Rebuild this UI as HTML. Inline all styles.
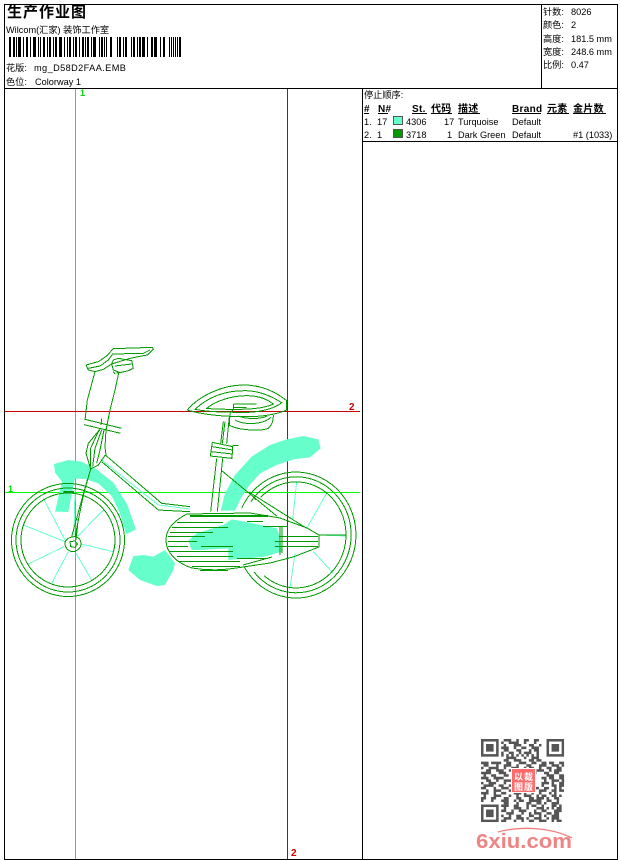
<!DOCTYPE html>
<html lang="zh"><head><meta charset="utf-8"><title>生产作业图</title>
<style>
html,body{margin:0;padding:0;background:#fff;width:620px;height:860px;overflow:hidden}
svg{display:block}
text{font-family:"Liberation Sans","WenQuanYi Zen Hei","Noto Sans CJK SC",sans-serif;font-size:9.2px;fill:#000}
.b{font-weight:bold;font-size:10px;letter-spacing:.3px}
.bl{stroke:#000;stroke-width:1;fill:none;shape-rendering:crispEdges}
.g{shape-rendering:crispEdges}
.g path,.g ellipse,.g circle{fill:none;stroke:#009900;stroke-width:1;vector-effect:non-scaling-stroke}
.t{fill:#66FFCC;stroke:none}
.s{shape-rendering:crispEdges}
.s path{fill:none;stroke:#66FFCC;stroke-width:1;vector-effect:non-scaling-stroke}
</style></head><body>
<svg width="620" height="860" viewBox="0 0 620 860" xmlns="http://www.w3.org/2000/svg">
<defs><clipPath id="qc"><rect x="0" y="0" width="33" height="33"/></clipPath></defs>
<rect width="620" height="860" fill="#fff"/>

<!-- guide lines -->
<g shape-rendering="crispEdges" stroke-width="1">
<path d="M75.5 89V859" stroke="#00FF00"/>
<path d="M287.5 89V859" stroke="#CC0000"/>
<path d="M4 411.5H360" stroke="#CC0000"/>
<path d="M4 492.5H360" stroke="#00FF00"/>
</g>
<text x="80" y="96" class="b" style="fill:#00dd00;font-size:9px">1</text>
<text x="8" y="492" class="b" style="fill:#00dd00;font-size:9px">1</text>
<text x="349" y="410" class="b" style="fill:#cc0000;font-size:10px">2</text>
<text x="291" y="856" class="b" style="fill:#cc0000;font-size:10px">2</text>

<!-- turquoise fills -->
<g transform="translate(0,340) scale(.33333)">
<path class="t" d="M162 372L205 360L245 365L290 388L340 428L380 490L408 568L378 583L360 520L335 468L295 430L255 417L225 416L222 428L205 516L165 515L186 425L165 398Z"/>
<path class="t" d="M385 690L400 648L430 645L460 650L495 630L525 670L520 690L495 735L470 738L420 720Z"/>
</g>
<g transform="translate(180,380) scale(.33333)">
<path class="t" d="M122 392L135 340L165 285L215 230L270 195L320 178L370 168L415 178L422 205L390 232L340 238L290 255L240 280L205 320L180 360L165 392Z"/>
<path class="t" d="M25 482L50 460L130 435L155 418L195 425L290 445L300 470L305 515L255 530L145 540L145 505L60 510L35 510Z"/>
</g>

<!-- spokes -->
<g class="s" transform="translate(0,340) scale(.33333)">
<path d="M195 600L130 475M195 605L70 555M192 620L85 672M205 635L155 730M228 640L275 720M243 612L340 635M232 590L310 510M222 585L225 450M305 360L475 495L570 507"/>
</g>
<g class="s" transform="translate(180,380) scale(.33333)">
<path d="M380 445L440 340M338 420L350 305M420 465L498 468M400 515L460 580M345 520L330 625"/>
</g>

<!-- wheels -->
<g class="g">
<ellipse cx="68" cy="540" rx="56.5" ry="56.5"/>
<ellipse cx="68" cy="540" rx="52" ry="52"/>
<ellipse cx="68" cy="540" rx="47" ry="47"/>
<path d="M241.6 508.4A60 63 0 1 1 244 566.5"/>
<path d="M251 501.7A55 58 0 1 1 254 572"/>
<path d="M260.6 497.5A50 53 0 1 1 264 575.6"/>
</g>

<!-- handlebar -->
<g class="g" transform="translate(70,340) scale(.33333)">
<path d="M48 75L85 65L110 48L130 26L248 22L250 28L232 45L215 48L180 55L125 72L100 88L75 95L55 90Z"/>
<path d="M55 85L90 78L115 60L128 42L220 40L240 30"/>
<path d="M125 72L130 60L145 55L185 62L190 85L175 92L150 98L130 90L125 72"/>
<path d="M135 78L185 72M130 95L135 102M145 95L140 100"/>
</g>
<!-- bike lines -->
<g class="g" transform="translate(0,340) scale(.33333)">
<path d="M285 95L262 180L255 240M357 95L345 150L330 210L318 270L315 320L318 345"/>
<path d="M255 238L365 265M252 254L362 280M305 235L303 255"/>
<path d="M300 268L265 310L258 340L272 387L295 375L316 345M305 270L285 325L278 380M298 268L272 325L272 380M312 270L300 330L290 370"/>
<path d="M272 387L250 465L225 590M262 420L245 480L215 590M235 535L228 600"/>
<path d="M195 610C195 598 210 590 225 590C238 592 243 602 243 612C243 625 228 636 215 635C203 632 195 622 195 610Z"/>
<path d="M210 605L225 603L232 612L225 622L212 620Z"/>
<path d="M316 345L485 490L570 500M305 365L475 510L570 515"/>
<path d="M190 455H222M190 457H222"/>
</g>
<g class="g" transform="translate(180,380) scale(.33333)">
<!-- saddle -->
<path d="M22 90C60 45 130 15 190 15C250 15 295 42 320 62L320 90C285 105 245 110 200 110C140 110 70 105 22 90Z"/>
<path d="M45 88C80 55 130 32 195 32C245 32 285 55 305 68C285 85 240 97 200 97C150 97 90 97 45 88Z"/>
<path d="M80 85C110 60 160 47 200 47C240 47 265 60 280 72C260 82 220 88 170 88C130 88 100 88 80 85Z"/>
<path d="M160 72H230M160 82H200M160 72V88L150 100"/>
<path d="M150 100L148 135C170 150 240 155 265 145C275 135 280 125 280 105M165 120C190 135 250 135 272 112M175 108C200 118 240 118 262 108"/>
<!-- seat post -->
<path d="M130 125L122 190M135 125L127 190M148 110L140 190"/>
<path d="M97 187L158 200L156 235L91 228ZM97 200L158 210M94 215L156 222M158 197H175"/>
<path d="M110 235L92 395M128 235L112 395"/>
<path d="M125 272L290 408M205 335L380 445M228 360L215 345"/>
</g>
<!-- chain guard and hatching -->
<g class="g">
<path d="M187 514C175 520 166 528 166 540C166 552 176 563 192 568C210 571 225 570 243 567L270 563L293 557L319 547V535L307 528L280 518L250 513L187 514"/>
<path d="M243 565L272 557M280 527V555M282 527V553M319 535H346"/>
<path d="M190 515.5H268M190 516.5H268"/>
<path d="M177 522.5H223M172 527.5H228M170 532.5H213M168 536.5H205M168 541.5H197M168 546.5H188M201 546.5H233M169 551.5H233M177 556.5H233M178 561.5H240M192 566.5H240M200 570.5H228"/>
<path d="M247 521.5H263M263 526.5H288M279 536.5H318M275 541.5H318M275 546.5H318M237 558.5H268"/>
</g>

<!-- frame borders -->
<g class="bl">
<rect x="4.5" y="4.5" width="613" height="855"/>
<path d="M4 88.5H618M541.5 4V88M362.5 88V860M362 141.5H618"/>
</g>

<!-- title -->
<text x="7" y="17" style="font-size:15px;font-weight:bold;letter-spacing:1px">生产作业图</text>
<text x="6" y="33">Wilcom(汇家) 装饰工作室</text>

<!-- barcode -->
<g fill="#000" shape-rendering="crispEdges">
<path d="M9 37h2v20h-2zM13 37h2v20h-2zM16 37h1v20h-1zM18 37h3v20h-3zM23 37h1v20h-1zM26 37h2v20h-2zM30 37h1v20h-1zM33 37h3v20h-3zM38 37h1v20h-1zM40 37h1v20h-1zM43 37h2v20h-2zM47 37h1v20h-1zM49 37h2v20h-2zM53 37h1v20h-1zM55 37h2v20h-2zM59 37h3v20h-3zM64 37h1v20h-1zM67 37h1v20h-1zM69 37h2v20h-2zM73 37h1v20h-1zM75 37h2v20h-2zM79 37h1v20h-1zM82 37h2v20h-2zM85 37h1v20h-1zM87 37h2v20h-2zM91 37h1v20h-1zM93 37h3v20h-3z"/>
<path d="M99 37h1v20h-1zM101 37h2v20h-2zM104 37h1v20h-1zM106 37h1v20h-1zM110 37h2v20h-2zM117 37h1v20h-1zM119 37h2v20h-2zM123 37h1v20h-1zM125 37h2v20h-2zM131 37h1v20h-1zM133 37h2v20h-2zM137 37h1v20h-1zM139 37h2v20h-2zM142 37h3v20h-3zM147 37h1v20h-1zM151 37h2v20h-2zM154 37h3v20h-3zM160 37h1v20h-1zM163 37h2v20h-2zM169 37h1v20h-1zM171 37h1v20h-1zM173 37h1v20h-1zM175 37h1v20h-1zM177 37h1v20h-1zM179 37h2v20h-2z"/>
</g>

<text x="6" y="71">花版:</text>
<text x="34" y="71" style="letter-spacing:.4px">mg_D58D2FAA.EMB</text>
<text x="6" y="85">色位:</text>
<text x="35" y="85">Colorway 1</text>

<!-- info -->
<text x="543" y="15">针数:</text><text x="571" y="15">8026</text>
<text x="543" y="28">颜色:</text><text x="571" y="28">2</text>
<text x="543" y="42">高度:</text><text x="571" y="42">181.5 mm</text>
<text x="543" y="55">宽度:</text><text x="571" y="55">248.6 mm</text>
<text x="543" y="68">比例:</text><text x="571" y="68">0.47</text>

<!-- table -->
<text x="364" y="98">停止顺序:</text>
<text x="364" y="112" class="b">#</text>
<text x="378" y="112" class="b">N#</text>
<text x="412" y="112" class="b">St.</text>
<text x="431" y="112" class="b">代码</text>
<text x="458" y="112" class="b">描述</text>
<text x="512" y="112" class="b">Brand</text>
<text x="547" y="112" class="b">元素</text>
<text x="573" y="112" class="b">金片数</text>
<path d="M364 113.5H369M378 113.5H388M412 113.5H427M431 113.5H452M458 113.5H480M512 113.5H541M547 113.5H569M573 113.5H606" stroke="#000" shape-rendering="crispEdges"/>

<text x="364" y="125">1.</text><text x="377" y="125">17</text>
<rect x="393.5" y="116.5" width="9" height="8" fill="#66FFCC" stroke="#555" shape-rendering="crispEdges"/>
<text x="406" y="125">4306</text><text x="444" y="125">17</text><text x="458" y="125">Turquoise</text><text x="512" y="125">Default</text>

<text x="364" y="138">2.</text><text x="377" y="138">1</text>
<rect x="393.5" y="129.5" width="9" height="8" fill="#009900" stroke="#555" shape-rendering="crispEdges"/>
<text x="406" y="138">3718</text><text x="447" y="138">1</text><text x="458" y="138">Dark Green</text><text x="512" y="138">Default</text><text x="573" y="138">#1 (1033)</text>

<!-- QR -->
<g transform="translate(481,739) scale(2.52)" clip-path="url(#qc)">
<g fill="none" stroke="#555" stroke-width="1">
<rect x=".5" y=".5" width="6" height="6"/><rect x="26.5" y=".5" width="6" height="6"/><rect x=".5" y="26.5" width="6" height="6"/>
<path d="M9 .5h3m2 0h1m2 0h2m2 0h2M8 1.5h1m2 0h4m2 0h1m3 0h1M9 2.5h1m3 0h3m3 0h2m2 0h1M8 3.5h3m2 0h1m2 0h2m2 0h3M9 4.5h2m3 0h2m3 0h1m1 0h2M8 5.5h1m2 0h2m2 0h1m1 0h3m2 0h1M8 6.5h1m1 0h1m1 0h1m1 0h1m1 0h1m1 0h1m1 0h1m1 0h1M10 7.5h4m3 0h1m2 0h3M9 8.5h2m2 0h3m3 0h2m1 0h2"/>
<path d="M0 9.5h3m1 0h4m2 0h2m3 0h3m2 0h2m2 0h2m1 0h2m2 0h2M1 10.5h2m3 0h1m2 0h3m2 0h1m3 0h2m3 0h3m2 0h3m1 0h1M0 11.5h1m2 0h4m2 0h1m2 0h3m2 0h1m1 0h2m2 0h1m2 0h2m2 0h2M2 12.5h2m2 0h3m2 0h1m2 0h2m2 0h3m1 0h3m2 0h1m1 0h3M0 13.5h4m3 0h3m2 0h2m3 0h2m2 0h1m3 0h2m2 0h2M1 14.5h1m2 0h2m3 0h2m5 0h0m10 0h3m2 0h2m1 0h1M0 15.5h3m2 0h4m3 0h1m11 0h2m1 0h2m2 0h2M2 16.5h2m2 0h1m2 0h3m2 0h0m11 0h1m2 0h3m1 0h2M0 17.5h1m2 0h3m3 0h1m2 0h1m11 0h3m1 0h1m2 0h2M1 18.5h4m2 0h2m2 0h2m11 0h1m3 0h2m1 0h2M0 19.5h2m3 0h1m2 0h3m2 0h1m1 0h3m3 0h2m2 0h2m2 0h1m1 0h1M2 20.5h1m2 0h3m3 0h2m3 0h1m2 0h2m2 0h3m2 0h2m1 0h2M0 21.5h3m2 0h1m2 0h2m3 0h3m1 0h1m2 0h1m2 0h1m3 0h1m1 0h1M1 22.5h1m3 0h3m3 0h1m2 0h1m2 0h3m2 0h1m1 0h2m2 0h2m1 0h1M0 23.5h2m2 0h2m3 0h2m3 0h2m3 0h2m1 0h3m1 0h1m2 0h2M0 24.5h1m3 0h1m3 0h3m2 0h1m1 0h2m2 0h5m2 0h2m2 0h1"/>
<path d="M9 25.5h2m3 0h1m3 0h2m2 0h2m1 0h1m2 0h3M8 26.5h3m2 0h2m3 0h1m1 0h2m2 0h1m3 0h2m1 0h1M9 27.5h1m3 0h3m2 0h1m3 0h3m1 0h1m1 0h1m1 0h2M8 28.5h2m2 0h1m2 0h3m3 0h1m2 0h2m3 0h3M10 29.5h3m3 0h1m2 0h1m1 0h3m2 0h2m1 0h2M8 30.5h1m2 0h1m2 0h2m3 0h2m2 0h1m1 0h1m2 0h3M9 31.5h3m2 0h3m1 0h1m2 0h3m2 0h1m1 0h3M8 32.5h2m3 0h1m2 0h1m2 0h2m2 0h3m2 0h1m1 0h2"/>
</g>
<path fill="#555" d="M2 2h3v3h-3zM28 2h3v3h-3zM2 28h3v3h-3z"/>
</g>
<rect x="511" y="768" width="25" height="25" fill="#fff"/>
<rect x="512" y="769" width="23" height="23" fill="#FF6A6A"/>
<text x="514" y="780" style="font-size:9px;fill:#fff;font-weight:bold">以</text>
<text x="524" y="780" style="font-size:9px;fill:#fff;font-weight:bold">裁</text>
<text x="514" y="790" style="font-size:9px;fill:#fff;font-weight:bold">图</text>
<text x="524" y="790" style="font-size:9px;fill:#fff;font-weight:bold">版</text>

<!-- watermark logo -->
<path d="M498 832C520 826 550 827 572 838" fill="none" stroke="#EE7F7F" stroke-width="1.3"/>
<text x="476" y="848" textLength="96" lengthAdjust="spacingAndGlyphs" style="font-size:20px;font-weight:bold;fill:#EF8484">6xiu.com</text>
</svg>
</body></html>
